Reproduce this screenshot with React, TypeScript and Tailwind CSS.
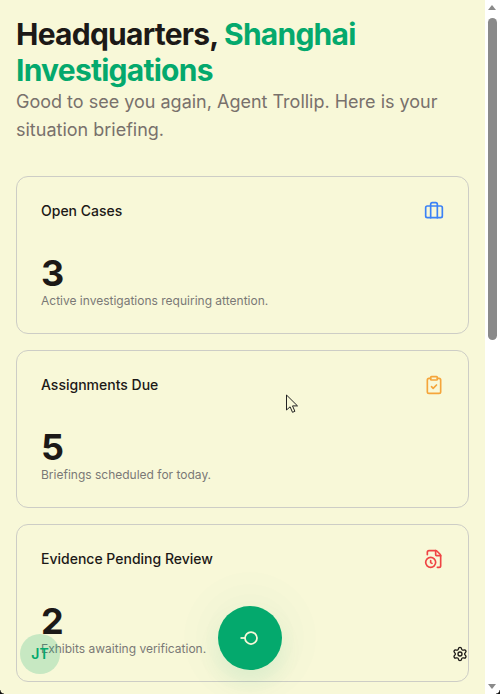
import React from "react";
import { Briefcase, ClipboardCheck, FileClock, Settings } from "lucide-react";

function Card({ title, value, desc, icon }: { title: string; value: string; desc: string; icon: React.ReactNode }) {
  return (
    <div className="rounded-xl border border-[#cdcdc6] h-[158px] px-6 pt-6 flex flex-col shrink-0">
      <div className="flex items-center justify-between h-5 pr-0">
        <h3 className="text-sm font-medium text-[#1c1917] leading-5">{title}</h3>
        {icon}
      </div>
      <div className="mt-[32px] text-4xl leading-10 font-bold text-[#1c1917]">{value}</div>
      <p className="text-xs leading-4 text-[#7a7876]">{desc}</p>
    </div>
  );
}

export default function App() {
  return (
    <div className="relative h-[694px] w-[500px] overflow-hidden flex bg-white font-['Inter',sans-serif]">
      <main className="w-[485px] shrink-0 bg-[#f8f8d8] px-4 pt-4 flex flex-col overflow-hidden">
        <h1 className="text-3xl leading-9 font-bold text-[#1c1917] tracking-tight">
          Headquarters, <span className="text-[#04a96d]">Shanghai Investigations</span>
        </h1>
        <p className="text-lg leading-7 text-[#78716c]">Good to see you again, Agent Trollip. Here is your situation briefing.</p>
        <div className="mt-8 flex flex-col gap-4">
          <Card title="Open Cases" value="3" desc="Active investigations requiring attention." icon={<Briefcase className="w-5 h-5 text-[#3b82f6]" />} />
          <Card title="Assignments Due" value="5" desc="Briefings scheduled for today." icon={<ClipboardCheck className="w-5 h-5 text-[#f5a53b]" />} />
          <Card title="Evidence Pending Review" value="2" desc="Exhibits awaiting verification." icon={<FileClock className="w-5 h-5 text-[#ef4444]" />} />
        </div>
      </main>

      <div className="w-[15px] shrink-0 bg-white relative">
        <div className="absolute left-[3px] top-[5px] w-0 h-0 border-l-[4px] border-r-[4px] border-b-[5px] border-l-transparent border-r-transparent border-b-[#8a8a8a]" />
        <div className="absolute left-[3px] top-[18px] w-[9px] h-[322px] rounded-t-[5px] rounded-b-[5px] bg-[#8a8a8a]" />
        <div className="absolute left-[3px] bottom-[5px] w-0 h-0 border-l-[4px] border-r-[4px] border-t-[5px] border-l-transparent border-r-transparent border-t-[#8a8a8a]" />
      </div>

      <div className="absolute left-[20px] top-[634px] w-10 h-10 rounded-full bg-[#04a96d]/20 flex items-center justify-center text-sm font-semibold text-[#04a96d]">JT</div>

      <div className="absolute left-[218px] top-[606px] w-16 h-16 rounded-full bg-[#04a96d] flex items-center justify-center shadow-[0_12px_22px_rgba(4,169,109,0.09),0_0_0_12px_rgba(4,169,109,0.008),0_0_0_22px_rgba(4,169,109,0.008),0_0_0_34px_rgba(4,169,109,0.008)]">
        <svg width="24" height="24" viewBox="0 0 24 24" fill="none" stroke="#f8f8d8" strokeWidth="1.75">
          <circle cx="13" cy="12" r="6" />
          <path d="M2.5 12h4.5" />
        </svg>
      </div>

      <Settings className="absolute left-[452px] top-[646px] w-4 h-4 text-[#1c1917]" />

      <svg className="absolute left-[285px] top-[394px]" width="15" height="21" viewBox="0 0 15 21">
        <path d="M1.5 1v15l3.6-3.2 2.4 5.5 2.4-1-2.4-5.4h5z" fill="#f8f8d8" stroke="#222" strokeWidth="1" />
      </svg>

      <div className="absolute left-0 bottom-0 w-[4px] h-[4px] bg-[radial-gradient(circle_at_100%_0%,transparent_3px,#111_4px)]" />
      <div className="absolute right-0 bottom-0 w-[4px] h-[4px] bg-[radial-gradient(circle_at_0%_0%,transparent_3px,#111_4px)]" />
    </div>
  );
}
